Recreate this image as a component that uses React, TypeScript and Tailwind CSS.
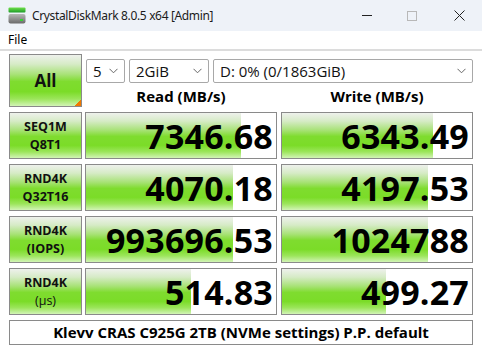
import React from "react";

const GREEN =
  "linear-gradient(to bottom, #eef1ec 0%, #d6ebc6 18%, #a8e277 38%, #7fdc2f 52%, #7bdc28 72%, #9be55a 86%, #d2f4b6 100%)";

function Label({ l1, l2 }: { l1: string; l2: string }) {
  return (
    <div
      className="w-[73px] h-[47px] border border-[#8a8a8a] flex flex-col items-center justify-center text-[12.5px] font-bold text-[#111] leading-[18px]"
      style={{ background: GREEN }}
    >
      <div>{l1}</div>
      <div className={l2 === "µs" ? "font-normal" : ""}>{l2 === "µs" ? "(µs)" : l2}</div>
    </div>
  );
}

function Value({ v, fill }: { v: string; fill: number }) {
  return (
    <div className="relative w-[192px] h-[47px] border border-[#8a8a8a] bg-white overflow-hidden">
      <div className="absolute left-0 top-0 bottom-0" style={{ width: fill, background: GREEN }} />
      <div className="relative h-full flex items-center justify-end pr-[3px] text-[34px] font-bold text-black leading-none tracking-[0.2px]">
        {v}
      </div>
    </div>
  );
}

function Combo({ w, text }: { w: string; text: string }) {
  return (
    <div className={`${w} h-[24px] bg-white border border-[#a8a8a8] rounded-[2px] flex items-center justify-between pl-[6px] pr-[6px] text-[15px] text-[#111]`}>
      <span className="leading-none">{text}</span>
      <svg width="9" height="6" viewBox="0 0 9 6">
        <path d="M0.5 0.8 L4.5 4.8 L8.5 0.8" fill="none" stroke="#666" strokeWidth="1" />
      </svg>
    </div>
  );
}

export default function App() {
  const rows = [
    { l1: "SEQ1M", l2: "Q8T1", r: "7346.68", rf: 155, w: "6343.49", wf: 151 },
    { l1: "RND4K", l2: "Q32T16", r: "4070.18", rf: 147, w: "4197.53", wf: 146 },
    { l1: "RND4K", l2: "(IOPS)", r: "993696.53", rf: 147, w: "1024788", wf: 146 },
    { l1: "RND4K", l2: "µs", r: "514.83", rf: 105, w: "499.27", wf: 104 },
  ];
  return (
    <div className="w-[482px] h-[352px] bg-white overflow-hidden" style={{ fontFamily: '"Open Sans", "Noto Sans", sans-serif' }}>
      {/* title bar */}
      <div className="h-[31px] bg-[#eef2f8] flex items-center relative">
        <svg className="ml-[8px]" width="18" height="17" viewBox="0 0 18 17">
          <defs>
            <linearGradient id="g1" x1="0" y1="0" x2="0" y2="1">
              <stop offset="0" stopColor="#6fe04a" />
              <stop offset="1" stopColor="#1e9b2a" />
            </linearGradient>
            <linearGradient id="g2" x1="0" y1="0" x2="0" y2="1">
              <stop offset="0" stopColor="#b8b8b8" />
              <stop offset="1" stopColor="#6a6a6a" />
            </linearGradient>
          </defs>
          <rect x="0.5" y="0.5" width="17" height="5" rx="1" fill="url(#g1)" />
          <rect x="0.5" y="7" width="17" height="9.5" rx="2" fill="url(#g2)" />
          <rect x="12" y="12" width="3" height="2" fill="#35d035" />
        </svg>
        <span className="ml-[6px] text-[12px] tracking-[-0.35px] text-[#1b1b1b]" style={{ fontFamily: '"Noto Sans", sans-serif' }}>
          CrystalDiskMark 8.0.5 x64 [Admin]
        </span>
        <div className="absolute left-[362px] top-[15px] w-[10px] h-px bg-[#222]" />
        <div className="absolute left-[407px] top-[11px] w-[10px] h-[10px] border border-[#b8b8b8]" />
        <svg className="absolute left-[454px] top-[10px]" width="11" height="11" viewBox="0 0 11 11">
          <path d="M0.5 0.5 L10.5 10.5 M10.5 0.5 L0.5 10.5" stroke="#222" strokeWidth="1" />
        </svg>
      </div>
      {/* menu */}
      <div className="h-[18px] bg-white flex items-center">
        <span className="ml-[8px] text-[12px] text-black" style={{ fontFamily: '"Noto Sans", sans-serif' }}>File</span>
      </div>
      <div className="h-[2px] bg-[#dcdcdc]" />
      {/* body */}
      <div className="pl-[9px] pt-[3px] flex flex-col gap-[5px]">
        <div className="flex gap-[3px]">
          <div
            className="relative w-[73px] h-[53px] border border-[#8a8a8a] flex items-center justify-center text-[17px] font-bold text-[#111]"
            style={{ background: GREEN }}
          >
            All
            <div
              className="absolute right-0 bottom-0 w-[7px] h-[7px]"
              style={{ background: "linear-gradient(135deg, transparent 50%, #f07800 50%)" }}
            />
          </div>
          <div className="flex flex-col">
            <div className="flex gap-[4px] mt-[5px] ml-[1px]">
              <Combo w="w-[39px]" text="5" />
              <Combo w="w-[80px]" text="2GiB" />
              <Combo w="w-[260px]" text="D: 0% (0/1863GiB)" />
            </div>
            <div className="flex gap-[4px] mt-[2px]">
              <div className="w-[192px] text-center text-[15px] font-bold text-black leading-[22px]">Read (MB/s)</div>
              <div className="w-[192px] text-center text-[15px] font-bold text-black leading-[22px]">Write (MB/s)</div>
            </div>
          </div>
        </div>
        {rows.map((r, i) => (
          <div key={i} className="flex gap-[3px]">
            <Label l1={r.l1} l2={r.l2} />
            <div className="flex gap-[4px]">
              <Value v={r.r} fill={r.rf} />
              <Value v={r.w} fill={r.wf} />
            </div>
          </div>
        ))}
        <div className="w-[464px] h-[25px] border border-[#8a8a8a] bg-white flex items-center justify-center text-[15px] font-bold text-black">
          Klevv CRAS C925G 2TB (NVMe settings) P.P. default
        </div>
      </div>
    </div>
  );
}
